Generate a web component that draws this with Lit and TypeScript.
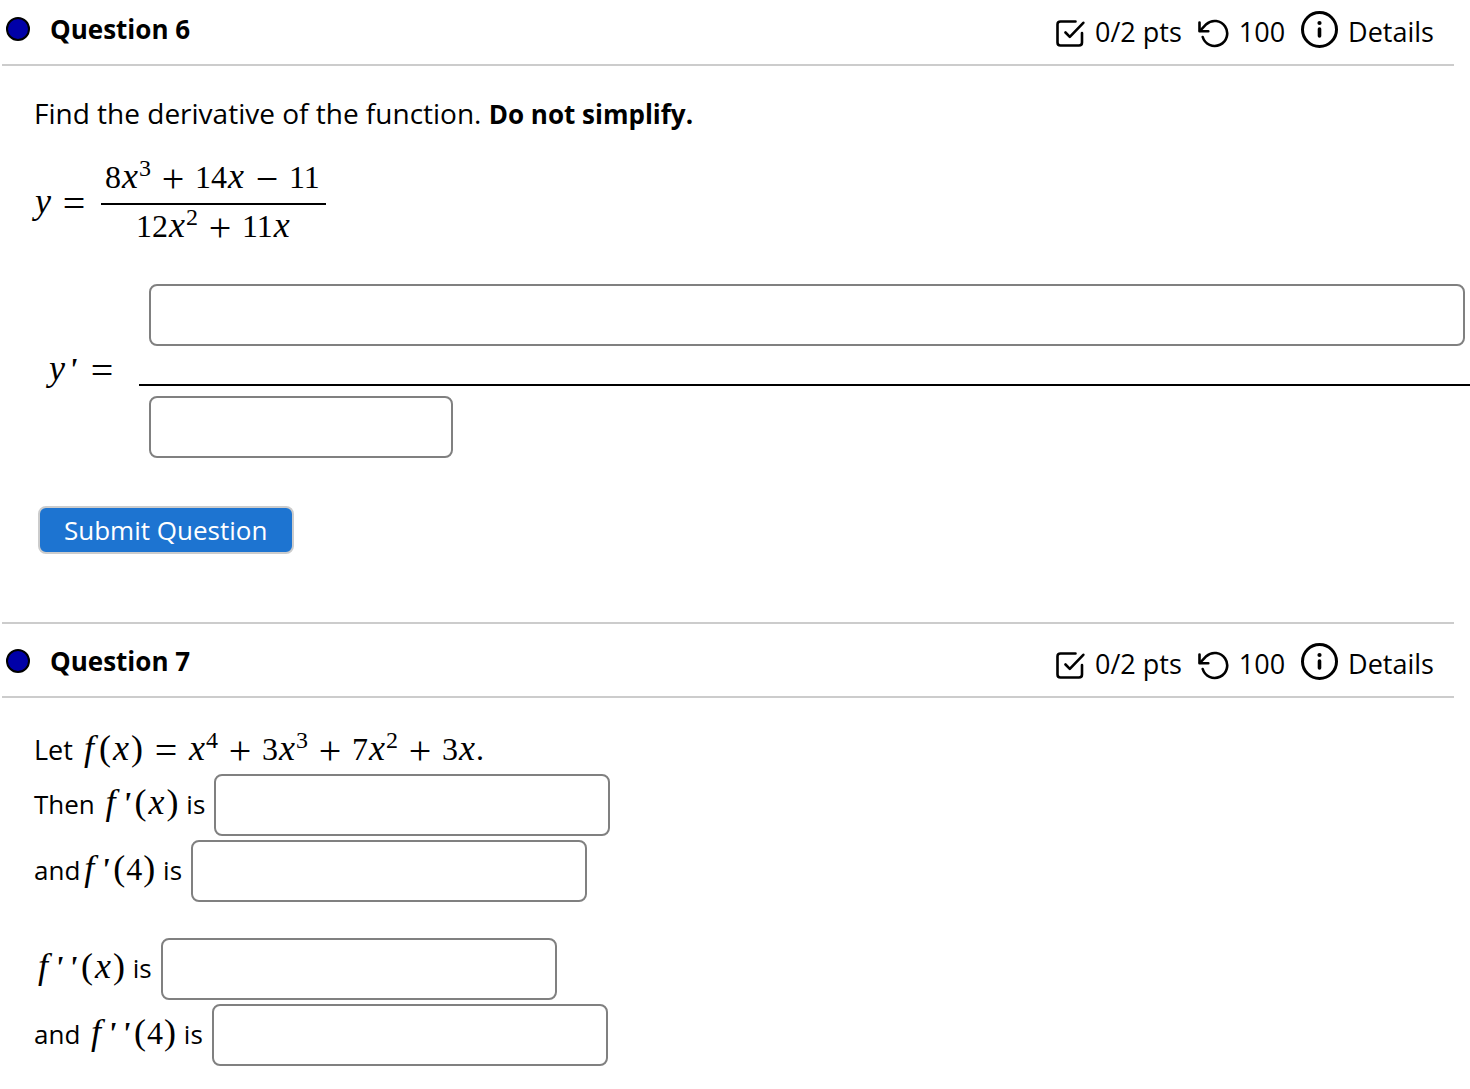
import { LitElement, html, css, svg, nothing } from "lit";
import type { TemplateResult } from "lit";
import { customElement, property } from "lit/decorators.js";

/* Shared look of inline mathematics. */
const mathStyles = css`
  .math {
    display: inline-block;
    font-family: "Liberation Serif", serif;
    font-size: 32px;
    font-weight: 400;
    line-height: 40px;
    white-space: nowrap;
  }
  .var,
  .op,
  .rel,
  .prime,
  .paren {
    display: inline-block;
    line-height: 0;
    text-align: center;
  }
  .var {
    width: 18px;
    font-size: 36px;
    font-style: italic;
  }
  .op,
  .rel {
    width: 24px;
    margin: 0 10px;
    font-size: 40px;
    vertical-align: -4px;
  }
  .prime {
    width: 14px;
    font-style: italic;
    font-weight: 700;
  }
  .paren {
    width: 14px;
    font-size: 36px;
  }
  .sup {
    font-size: 24px;
    line-height: 0;
    vertical-align: 12px;
  }
`;

const v = (name: string) => html`<i class="var">${name}</i>`;
const op = (sign: string) => html`<span class="op">${sign}</span>`;
const eq = html`<span class="rel">=</span>`;
const sup = (n: number) => html`<sup class="sup">${n}</sup>`;
const primes = (n: number) =>
  Array.from({ length: n }, () => html`<span class="prime">'</span>`);
const call = (order: number, arg: unknown) =>
  html`${v("f")}${primes(order)}<span class="paren">(</span>${arg}<span class="paren">)</span>`;

const checkIcon = svg`
  <path d="M19.500 2.500H4.500Q1.500 2.500 1.500 5.500V23.500Q1.500 26.500 4.500 26.500H23Q26 26.500 26 23.500V14" />
  <path d="M9.500 13.500L13.800 17.800L27.300 3.800" />`;
const retryIcon = svg`
  <path d="M1.500 4.500V13.300H10.300" />
  <path d="M2 12.800L8.300 6.200A12.500 12.500 0 1 1 4.700 19" />`;
const infoIcon = svg`
  <circle cx="18.500" cy="18.500" r="17" />
  <path d="M18.500 18V25" stroke-width="3.600" />
  <circle cx="18.500" cy="12" r="2.100" fill="currentColor" stroke="none" />`;

@customElement("question-header")
export class QuestionHeader extends LitElement {
  @property({ type: Number }) number = 0;
  @property() score = "0/2 pts";
  @property() attempts = "100";

  static styles = css`
    :host {
      display: flex;
      justify-content: space-between;
      align-items: flex-start;
      height: 64px;
      margin: 0 16px 0 2px;
      border-bottom: 2px solid #ccc;
    }
    .title {
      display: flex;
      align-items: center;
      gap: 20px;
      margin: 0;
      padding: 11px 0 0 4px;
      font-size: 26px;
      font-weight: 700;
      line-height: 36px;
    }
    .dot {
      box-sizing: border-box;
      width: 24px;
      height: 24px;
      border: 2px solid #000;
      border-radius: 50%;
      background: #0000a8;
    }
    .info {
      display: flex;
      align-items: center;
      gap: 16px;
      padding: 11px 20px 0 0;
      line-height: 42px;
    }
    .item {
      display: flex;
      align-items: center;
      gap: 10px;
    }
    svg {
      flex: none;
      margin-top: 2px;
      fill: none;
      stroke: currentColor;
      stroke-width: 2.6;
      stroke-linecap: round;
      stroke-linejoin: round;
    }
    .large {
      margin: 0 0 5px;
      stroke-width: 3;
    }
    .details {
      padding: 0;
      border: 0;
      background: none;
      color: inherit;
      font: inherit;
      cursor: pointer;
    }
  `;

  render() {
    return html`
      <h2 class="title"><span class="dot"></span>Question ${this.number}</h2>
      <div class="info">
        <span class="item">
          <svg width="29" height="29" viewBox="0 0 29 29" aria-hidden="true">${checkIcon}</svg>
          ${this.score}
        </span>
        <span class="item">
          <svg width="31" height="31" viewBox="0 0 31 31" aria-hidden="true">${retryIcon}</svg>
          ${this.attempts}
        </span>
        <button class="item details" type="button">
          <svg class="large" width="37" height="37" viewBox="0 0 37 37" aria-hidden="true">${infoIcon}</svg>
          Details
        </button>
      </div>
    `;
  }
}

@customElement("app-root")
export class AppRoot extends LitElement {
  static styles = [
    mathStyles,
    css`
      :host {
        display: block;
        overflow-x: hidden;
        background: #fff;
        color: #000;
        font-family: "Trebuchet MS", "Open Sans", sans-serif;
        font-size: 27px;
        font-weight: 500;
        line-height: 36px;
      }
      .body {
        padding-left: 34px;
      }
      .first {
        padding-top: 29px;
        padding-bottom: 68px;
      }
      .second {
        padding-top: 31px;
        padding-bottom: 20px;
      }
      .divider {
        height: 8px;
        margin: 0 16px 0 2px;
        border-top: 2px solid #ccc;
      }
      p {
        margin: 0;
      }
      .prompt {
        font-size: 28px;
      }
      b {
        font-size: 26px;
      }
      .given {
        display: flex;
        align-items: center;
        margin-top: 25px;
      }
      .fraction {
        display: flex;
        flex-direction: column;
        align-items: center;
        margin-left: 5px;
      }
      .top {
        padding: 0 6px 6px 4px;
        border-bottom: 2px solid #000;
      }
      .bottom {
        padding-top: 1px;
      }
      .answer {
        display: flex;
        align-items: center;
        margin-top: 38px;
        padding-left: 14px;
      }
      .lead {
        padding-bottom: 4px;
      }
      .stack {
        display: flex;
        flex: 1;
        flex-direction: column;
        margin-left: 15px;
      }
      .over {
        display: flex;
        padding: 0 5px 38px 10px;
        border-bottom: 2px solid #000;
      }
      .under {
        padding: 10px 0 0 10px;
        display: flex;
      }
      input {
        box-sizing: border-box;
        width: 396px;
        height: 62px;
        margin: 0;
        padding: 0 10px;
        border: 2px solid #808080;
        border-radius: 8px;
        background: #fff;
        color: inherit;
        font: inherit;
      }
      .wide {
        flex: 1;
        width: auto;
      }
      .short {
        width: 304px;
      }
      .submit {
        height: 48px;
        margin: 48px 0 0 4px;
        padding: 0 25px 0 24px;
        border: 2px solid #ccc;
        border-radius: 8px;
        background: #1d74d1;
        color: #fff;
        font: inherit;
        font-size: 26px;
        cursor: pointer;
      }
      .intro {
        margin-bottom: 3px;
      }
      .line {
        display: flex;
        align-items: center;
        gap: 9px;
        padding: 2px 0;
        font-size: 26px;
      }
      label {
        padding-bottom: 4px;
      }
      .gap {
        margin-top: 32px;
      }
    `,
  ];

  private line(id: string, lead: string, math: TemplateResult, gap = false) {
    return html`
      <div class="line ${gap ? "gap" : ""}">
        <label for=${id}>${lead || nothing}<span class="math">${math}</span> is</label>
        <input id=${id} type="text" autocomplete="off" />
      </div>
    `;
  }

  render() {
    const x = v("x");
    return html`
      <section>
        <question-header number="6"></question-header>
        <div class="body first">
          <p class="prompt">Find the derivative of the function. <b>Do not simplify.</b></p>
          <div class="given">
            <span class="math">${v("y")}${eq}</span>
            <span class="fraction">
              <span class="math top">8${x}${sup(3)}${op("+")}14${x}${op("−")}11</span>
              <span class="math bottom">12${x}${sup(2)}${op("+")}11${x}</span>
            </span>
          </div>
          <div class="answer">
            <span class="math lead">${v("y")}${primes(1)}${eq}</span>
            <div class="stack">
              <div class="over">
                <input class="wide" type="text" aria-label="Numerator" autocomplete="off" />
              </div>
              <div class="under">
                <input class="short" type="text" aria-label="Denominator" autocomplete="off" />
              </div>
            </div>
          </div>
          <button class="submit" type="button">Submit Question</button>
        </div>
      </section>
      <section>
        <div class="divider"></div>
        <question-header number="7"></question-header>
        <div class="body second">
          <p class="intro">
            Let
            <span class="math"
              >${call(0, x)}${eq}${x}${sup(4)}${op("+")}3${x}${sup(3)}${op("+")}7${x}${sup(2)}${op("+")}3${x}.</span
            >
          </p>
          ${this.line("first-x", "Then ", html`${call(1, x)}`)}
          ${this.line("first-4", "and", html`${call(1, 4)}`)}
          ${this.line("second-x", "", html`${call(2, x)}`, true)}
          ${this.line("second-4", "and ", html`${call(2, 4)}`)}
        </div>
      </section>
    `;
  }
}
